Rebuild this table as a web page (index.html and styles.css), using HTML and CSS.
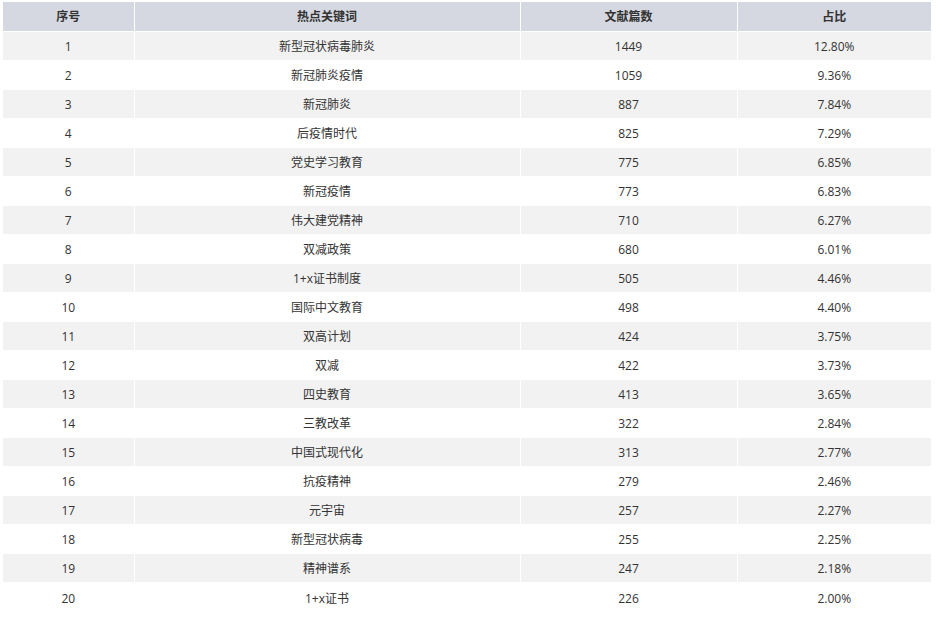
FILE: index.html
```html
<!DOCTYPE html>
<html lang="zh">
<head>
<meta charset="utf-8">
<link rel="stylesheet" href="styles.css">
</head>
<body>
<table class="hot-table">
  <colgroup>
    <col class="c1"><col class="c2"><col class="c3"><col class="c4">
  </colgroup>
  <thead>
    <tr><th>序号</th><th>热点关键词</th><th>文献篇数</th><th>占比</th></tr>
  </thead>
  <tbody>
    <tr><td>1</td><td>新型冠状病毒肺炎</td><td>1449</td><td>12.80%</td></tr>
    <tr><td>2</td><td>新冠肺炎疫情</td><td>1059</td><td>9.36%</td></tr>
    <tr><td>3</td><td>新冠肺炎</td><td>887</td><td>7.84%</td></tr>
    <tr><td>4</td><td>后疫情时代</td><td>825</td><td>7.29%</td></tr>
    <tr><td>5</td><td>党史学习教育</td><td>775</td><td>6.85%</td></tr>
    <tr><td>6</td><td>新冠疫情</td><td>773</td><td>6.83%</td></tr>
    <tr><td>7</td><td>伟大建党精神</td><td>710</td><td>6.27%</td></tr>
    <tr><td>8</td><td>双减政策</td><td>680</td><td>6.01%</td></tr>
    <tr><td>9</td><td>1+x证书制度</td><td>505</td><td>4.46%</td></tr>
    <tr><td>10</td><td>国际中文教育</td><td>498</td><td>4.40%</td></tr>
    <tr><td>11</td><td>双高计划</td><td>424</td><td>3.75%</td></tr>
    <tr><td>12</td><td>双减</td><td>422</td><td>3.73%</td></tr>
    <tr><td>13</td><td>四史教育</td><td>413</td><td>3.65%</td></tr>
    <tr><td>14</td><td>三教改革</td><td>322</td><td>2.84%</td></tr>
    <tr><td>15</td><td>中国式现代化</td><td>313</td><td>2.77%</td></tr>
    <tr><td>16</td><td>抗疫精神</td><td>279</td><td>2.46%</td></tr>
    <tr><td>17</td><td>元宇宙</td><td>257</td><td>2.27%</td></tr>
    <tr><td>18</td><td>新型冠状病毒</td><td>255</td><td>2.25%</td></tr>
    <tr><td>19</td><td>精神谱系</td><td>247</td><td>2.18%</td></tr>
    <tr class="last"><td>20</td><td>1+x证书</td><td>226</td><td>2.00%</td></tr>
  </tbody>
</table>
</body>
</html>
```
FILE: styles.css
```css
html, body {
  margin: 0;
  padding: 0;
  background: #ffffff;
}
body {
  padding: 2px 0 0 3px;
  font-family: "Open Sans", "Noto Sans CJK SC", sans-serif;
  font-size: 12px;
  color: #333333;
}
.hot-table {
  border-collapse: collapse;
  table-layout: fixed;
  width: 928px;
}
.c1 { width: 131px; }
.c2 { width: 386px; }
.c3 { width: 217px; }
.c4 { width: 194px; }
.hot-table th,
.hot-table td {
  padding: 0;
  text-align: center;
  vertical-align: middle;
  border-left: 1px solid #ffffff;
  line-height: 16px;
}
.hot-table th:first-child,
.hot-table td:first-child {
  border-left: none;
}
.hot-table th {
  height: 29px;
  background: #d5d8e0;
  font-weight: bold;
  color: #333333;
}
.hot-table td {
  height: 26px;
  padding-top: 2px;
  border-top: 1px solid #ffffff;
}
.hot-table tbody tr:nth-child(odd) td {
  background: #f2f2f2;
}
.hot-table tr.last td {
  height: 28px;
  padding-top: 2px;
}
```
